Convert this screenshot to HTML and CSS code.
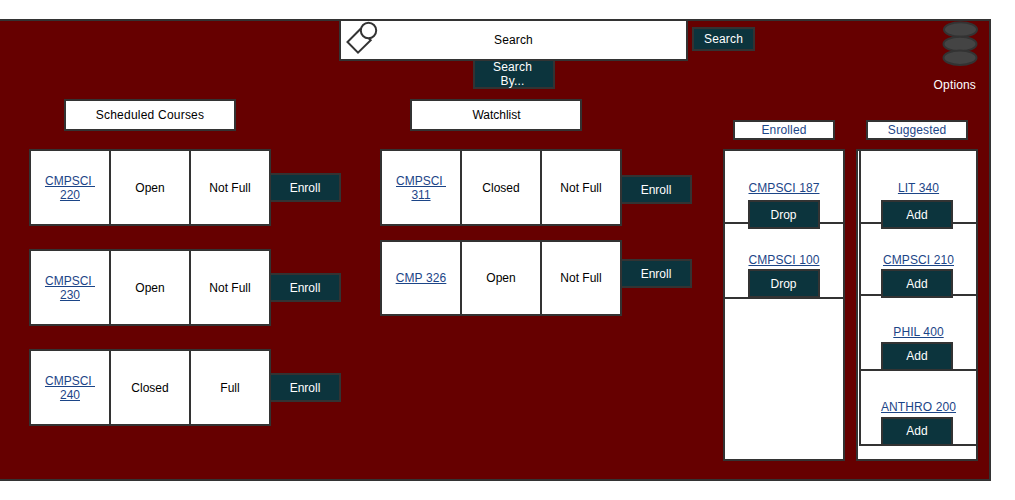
FILE: index.html
```html
<!DOCTYPE html>
<html lang="en">
<head>
<meta charset="utf-8">
<title>Course Enrollment</title>
<link rel="stylesheet" href="styles.css">
</head>
<body>
<div class="panel">
  <header class="header">
    <div class="search">
      <div class="search-box">
        <svg class="search-icon" width="36" height="36" viewBox="343 21 36 36" fill="#fff" stroke="#333" stroke-width="2">
          <path d="M347.5 42 358 52.6 370.7 40.2 360.2 29.3Z"/>
          <circle cx="368.5" cy="30.5" r="7.7"/>
        </svg>
        <span>Search</span>
      </div>
      <button class="btn search-by">Search<br>By...</button>
    </div>
    <button class="btn search-go">Search</button>
    <div class="options">
      <svg width="38" height="48" viewBox="941 20 38 48" fill="#444" stroke="#333" stroke-width="2">
        <ellipse cx="960.5" cy="29.5" rx="16.5" ry="7.2"/>
        <ellipse cx="960" cy="44" rx="16.5" ry="7.2"/>
        <ellipse cx="960" cy="57.7" rx="16.5" ry="7.2"/>
      </svg>
      <span class="options-label">Options</span>
    </div>
  </header>
  <main class="main">
    <section class="courses">
      <h2 class="title wide">Scheduled Courses</h2>
      <div class="row">
        <div class="cell"><a class="link">CMPSCI&nbsp;<br>220</a></div><div class="cell">Open</div><div class="cell">Not Full</div>
        <button class="btn enroll">Enroll</button>
      </div>
      <div class="row">
        <div class="cell"><a class="link">CMPSCI&nbsp;<br>230</a></div><div class="cell">Open</div><div class="cell">Not Full</div>
        <button class="btn enroll">Enroll</button>
      </div>
      <div class="row">
        <div class="cell"><a class="link">CMPSCI&nbsp;<br>240</a></div><div class="cell">Closed</div><div class="cell">Full</div>
        <button class="btn enroll">Enroll</button>
      </div>
    </section>
    <section class="courses watchlist">
      <h2 class="title">Watchlist</h2>
      <div class="row">
        <div class="cell"><a class="link">CMPSCI&nbsp;<br>311</a></div><div class="cell">Closed</div><div class="cell">Not Full</div>
        <button class="btn enroll low">Enroll</button>
      </div>
      <div class="row short">
        <div class="cell"><a class="link">CMP 326</a></div><div class="cell">Open</div><div class="cell">Not Full</div>
        <button class="btn enroll high">Enroll</button>
      </div>
    </section>
    <section class="side">
      <h2 class="side-title">Enrolled</h2>
      <div class="list">
        <div class="item first"><a class="link">CMPSCI 187</a><button class="btn">Drop</button></div>
        <div class="item tall near"><a class="link">CMPSCI 100</a><button class="btn">Drop</button></div>
      </div>
    </section>
    <section class="side suggested">
      <h2 class="side-title">Suggested</h2>
      <div class="list inset">
        <div class="item first"><a class="link">LIT 340</a><button class="btn">Add</button></div>
        <div class="item near"><a class="link">CMPSCI 210</a><button class="btn">Add</button></div>
        <div class="item tall"><a class="link">PHIL 400</a><button class="btn">Add</button></div>
        <div class="item tall"><a class="link">ANTHRO 200</a><button class="btn">Add</button></div>
      </div>
    </section>
  </main>
</div>
</body>
</html>
```
FILE: styles.css
```css
* { box-sizing: border-box; }
body {
  margin: 0;
  padding-top: 19px;
  background: #fff;
  color: #000;
  font: 12px/14px "Liberation Sans", Arial, sans-serif;
}
.panel {
  width: 991px;
  height: 462px;
  background: #600;
  border: 2px solid #333;
  border-left: 0;
}
.header {
  display: flex;
  align-items: flex-start;
  height: 78px;
  padding-left: 339px;
  letter-spacing: 0.15px;
}
.search {
  display: flex;
  flex-direction: column;
  width: 349px;
  margin-top: -2px;
}
.search-box {
  display: flex;
  align-items: center;
  height: 42px;
  padding-left: 2px;
  background: #fff;
  border: 2px solid #333;
  z-index: 1;
}
.search-icon {
  margin: -2px 115px 0 0;
}
.btn {
  display: flex;
  align-items: center;
  justify-content: center;
  width: 72px;
  height: 29px;
  padding: 0;
  border: 2px solid #333;
  border-radius: 0;
  background: #0c343d;
  color: #fff;
  font: inherit;
  letter-spacing: inherit;
}
.search-by {
  width: 82px;
  height: 30px;
  margin: -2px 0 0 134px;
  padding-right: 3px;
}
.search-go {
  width: 63px;
  height: 24px;
  margin: 6px 0 0 4px;
}
.options {
  display: flex;
  flex-direction: column;
  align-items: flex-end;
  width: 44px;
  margin: -1px 0 0 179px;
}
.options svg { margin-right: -1px; }
.options-label { margin: 10px 2px 0 0; color: #fff; white-space: nowrap; }
.main {
  display: flex;
  align-items: flex-start;
}
.courses {
  width: 312px;
  margin-left: 29px;
}
.title, .side-title {
  display: flex;
  align-items: center;
  justify-content: center;
  margin: 0;
  background: #fff;
  border: 2px solid #333;
  font: inherit;
}
.title {
  width: 172px;
  height: 32px;
  margin: 0 0 18px 35px;
  padding-left: 1px;
}
.title.wide { padding: 0; letter-spacing: 0.22px; }
.row {
  display: flex;
  align-items: center;
  height: 77px;
  margin-bottom: 23px;
}
.cell {
  display: flex;
  align-items: center;
  justify-content: center;
  width: 82px;
  height: 77px;
  background: #fff;
  border: 2px solid #333;
  text-align: center;
  z-index: 1;
}
.cell + .cell { margin-left: -2px; }
.row.short, .short .cell { height: 76px; }
.short .link { letter-spacing: 0.12px; }
.enroll { margin-left: -2px; }
.enroll.low { margin-top: 4px; }
.enroll.high { margin-top: -9px; }
.watchlist { margin-left: 39px; }
.watchlist .title { margin-left: 30px; }
.watchlist .row { margin-bottom: 14px; }
.link {
  color: #1c4587;
  text-decoration: underline;
}
.side {
  display: flex;
  flex-direction: column;
  align-items: center;
  width: 122px;
  margin: 21px 0 0 31px;
}
.suggested { margin-left: 11px; }
.side-title {
  width: 102px;
  height: 20px;
  margin-bottom: 9px;
  color: #1c4587;
  letter-spacing: 0.12px;
}
.list {
  width: 122px;
  height: 312px;
  background: #fff;
  border: 2px solid #333;
}
.item {
  display: flex;
  flex-direction: column;
  align-items: center;
  gap: 3px;
  height: 72px;
  padding-top: 29px;
  border-bottom: 2px solid #333;
}
.item .link { letter-spacing: 0.1px; }
.item.first { padding-top: 30px; gap: 5px; height: 73px; }
.item.tall { height: 75px; }
.item.near { gap: 2px; }
.item .btn { flex-shrink: 0; padding-right: 1px; z-index: 1; }
.inset { padding-left: 1px; }
.inset .item { border-left: 2px solid #333; }
.inset .btn { margin-right: 3px; padding-right: 0; }
.inset .tall .btn { padding-bottom: 2px; }
```
